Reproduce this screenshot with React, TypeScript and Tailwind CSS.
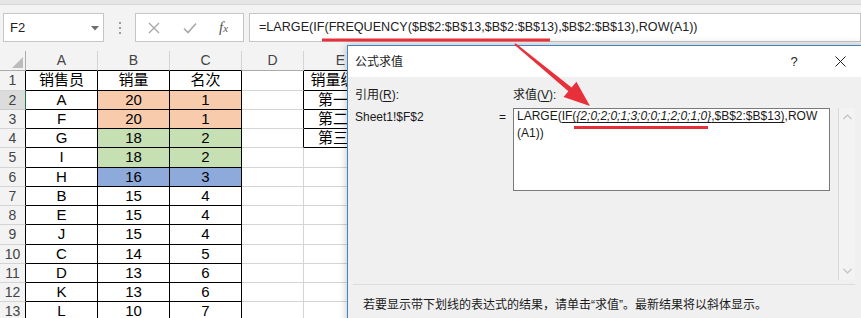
import React from "react";

const FONT = '"Liberation Sans", "Noto Sans CJK SC", sans-serif';

const colA = ["销售员", "A", "F", "G", "I", "H", "B", "E", "J", "C", "D", "K", "L"];
const colB = ["销量", "20", "20", "18", "18", "16", "15", "15", "15", "14", "13", "13", "10"];
const colC = ["名次", "1", "1", "2", "2", "3", "4", "4", "4", "5", "6", "6", "7"];
const colE = ["销量级别", "第一名", "第二名", "第三名"];

function fillOf(r: number, c: number): string {
  if (c === 2 || c === 3) {
    if (r === 2 || r === 3) return "bg-[#f8cbad]";
    if (r === 4 || r === 5) return "bg-[#c6e0b4]";
    if (r === 6) return "bg-[#8eaadb]";
  }
  return "bg-white";
}

function rightOf(r: number, c: number): string {
  if (c >= 1 && c <= 3) return "border-r-black";
  if ((c === 4 || c === 5) && r <= 4) return "border-r-black";
  return "border-r-[#d4d4d4]";
}

function bottomOf(r: number, c: number): string {
  if (c >= 1 && c <= 3) return "border-b-black";
  if (c === 5 && r <= 4) return "border-b-black";
  return "border-b-[#d4d4d4]";
}

function textOf(r: number, c: number): string {
  const i = r - 1;
  if (c === 1) return colA[i] ?? "";
  if (c === 2) return colB[i] ?? "";
  if (c === 3) return colC[i] ?? "";
  if (c === 5) return colE[i] ?? "";
  return "";
}

function Grid() {
  const headers = ["A", "B", "C", "D", "E", "F"];
  const cells: React.ReactNode[] = [];
  cells.push(
    <div key="corner" className="relative bg-[#f3f3f3] border-r border-b border-r-[#ababab] border-b-[#ababab]">
      <svg className="absolute left-[12px] top-[6px]" width="11" height="11" viewBox="0 0 11 11">
        <polygon points="11,0 11,11 0,11" fill="#bcbcbc" />
      </svg>
    </div>
  );
  headers.forEach((h, i) => {
    const c = i + 1;
    const bottom = c <= 3 || c === 5 ? "border-b-black" : "border-b-[#ababab]";
    cells.push(
      <div
        key={"h" + c}
        className={`flex items-center justify-center bg-[#f3f3f3] text-[14px] text-[#444] border-r border-b border-r-[#d4d4d4] ${bottom}`}
      >
        {h}
      </div>
    );
  });
  for (let r = 1; r <= 13; r++) {
    const sel = r === 2;
    cells.push(
      <div
        key={"rh" + r}
        className={
          sel
            ? "flex items-center justify-center text-[14px] text-[#444] bg-[#dcdcdc] border-r border-b border-r-[#217346] border-b-[#c8c8c8]"
            : "flex items-center justify-center text-[14px] text-[#444] bg-[#f3f3f3] border-r border-b border-r-black border-b-[#d4d4d4]"
        }
      >
        {r}
      </div>
    );
    for (let c = 1; c <= 6; c++) {
      cells.push(
        <div
          key={`c${r}-${c}`}
          className={`flex items-center justify-center overflow-hidden whitespace-nowrap text-[15px] text-black border-r border-b ${fillOf(r, c)} ${rightOf(r, c)} ${bottomOf(r, c)}`}
        >
          {textOf(r, c)}
        </div>
      );
    }
  }
  return (
    <div className="grid grid-cols-[26px_72px_72px_72px_62px_74px_1fr] grid-rows-[20px_20px_19px_19px_19px_20px_19px_19px_19px_20px_19px_19px_19px_20px]">
      {cells}
    </div>
  );
}

function FormulaBar() {
  return (
    <div className="h-[51px] bg-[#f3f3f3]">
      <div className="h-[5px] bg-[#e6e6e6] border-b border-[#d6d6d6]" />
      <div className="flex items-center mt-[8px] h-[29px] pl-[3px]">
        <div className="relative flex items-center w-[101px] h-[29px] bg-white border border-[#c6c6c6] pl-[6px] text-[13px] text-[#222]">
          F2
          <svg className="absolute left-[87px] top-[12px]" width="8" height="5" viewBox="0 0 8 5">
            <polygon points="0,0 8,0 4,4.5" fill="#6e6e6e" />
          </svg>
        </div>
        <div className="w-[31px] flex flex-col items-center gap-[3px]">
          <span className="block w-[2px] h-[2px] bg-[#9a9a9a]" />
          <span className="block w-[2px] h-[2px] bg-[#9a9a9a]" />
          <span className="block w-[2px] h-[2px] bg-[#9a9a9a]" />
        </div>
        <div className="flex items-center w-[109px] h-[29px] bg-white border border-[#c6c6c6]">
          <svg className="ml-[12px]" width="12" height="12" viewBox="0 0 12 12">
            <path d="M1 1 L11 11 M11 1 L1 11" stroke="#a8a8a8" strokeWidth="1.4" fill="none" />
          </svg>
          <svg className="ml-[23px]" width="14" height="12" viewBox="0 0 14 12">
            <path d="M1 6.5 L5 10.5 L13 1.5" stroke="#a8a8a8" strokeWidth="1.6" fill="none" />
          </svg>
          <span
            className="ml-[22px] text-[15px] italic text-[#555]"
            style={{ fontFamily: '"Liberation Serif", serif' }}
          >
            f<span className="text-[11px]">x</span>
          </span>
        </div>
        <div className="flex-1 flex items-center h-[29px] ml-[5px] bg-white border border-[#c6c6c6] pl-[9px] text-[12.6px] text-[#222] whitespace-nowrap">
          =LARGE(IF(FREQUENCY($B$2:$B$13,$B$2:$B$13),$B$2:$B$13),ROW(A1))
        </div>
      </div>
    </div>
  );
}

function Dialog() {
  return (
    <div className="absolute left-[347px] top-[45px] w-[517px] h-[290px] bg-[#f0f0f0] border border-[#3d86c8] shadow-[0_0_8px_rgba(0,0,0,0.25)] text-[12px] text-[#1a1a1a]">
      <div className="flex items-center h-[31px] bg-white pl-[7px]">
        <span>公式求值</span>
        <div className="ml-auto flex items-center h-full">
          <div className="w-[46px] flex items-center justify-center text-[13px] text-[#222]">?</div>
          <div className="w-[46px] flex items-center justify-center">
            <svg width="11" height="11" viewBox="0 0 11 11">
              <path d="M0.5 0.5 L10.5 10.5 M10.5 0.5 L0.5 10.5" stroke="#222" strokeWidth="1" fill="none" />
            </svg>
          </div>
        </div>
      </div>
      <div className="flex items-center h-[18px] mt-[9px] pl-[7px]">
        <span className="w-[158px]">
          引用(<span className="underline underline-offset-2">R</span>):
        </span>
        <span>
          求值(<span className="underline underline-offset-2">V</span>):
        </span>
      </div>
      <div className="flex mt-[4px] h-[172px]">
        <div className="w-[151px] pl-[7px] pt-[1px] leading-[16px]">Sheet1!$F$2</div>
        <div className="w-[14px] pt-[1px] leading-[16px]">=</div>
        <div className="w-[317px] h-[83px] bg-white border border-[#7a7a7a] pl-[3px] overflow-hidden">
          <div className="-mt-[1px] leading-[16.5px] whitespace-nowrap">
            LARGE(
            <span className="underline underline-offset-2">
              IF(<span className="italic">{"{2;0;2;0;1;3;0;0;1;2;0;1;0}"}</span>,$B$2:$B$13)
            </span>
            ,ROW
            <br />
            (A1))
          </div>
        </div>
        <div className="relative ml-[8px] w-[17px] h-[172px] border-l border-[#dadada] bg-[#f3f3f3]">
          <svg className="absolute left-[4px] top-[6px]" width="9" height="6" viewBox="0 0 9 6">
            <path d="M0.5 5 L4.5 1 L8.5 5" stroke="#c2c2c2" strokeWidth="1.2" fill="none" />
          </svg>
          <svg className="absolute left-[4px] bottom-[6px]" width="9" height="6" viewBox="0 0 9 6">
            <path d="M0.5 1 L4.5 5 L8.5 1" stroke="#c2c2c2" strokeWidth="1.2" fill="none" />
          </svg>
        </div>
      </div>
      <div className="ml-[5px] mt-[4px] w-[502px] h-px bg-[#dcdcdc]" />
      <div className="pl-[15px] mt-[12px] leading-[16px]">
        若要显示带下划线的表达式的结果，请单击“求值”。最新结果将以斜体显示。
      </div>
    </div>
  );
}

function Annotations() {
  return (
    <svg className="absolute left-0 top-0 pointer-events-none" width="861" height="318" viewBox="0 0 861 318">
      <rect x="322" y="38.5" width="228" height="3" fill="#e8303a" />
      <rect x="574" y="126" width="134" height="3" fill="#e8303a" />
      <polygon
        points="515.6,43.2 571.6,87.5 576.4,81.7 590,106 563.6,97.1 568.4,91.3 514.4,44.8"
        fill="#e8303a"
      />
    </svg>
  );
}

export default function App() {
  return (
    <div className="relative w-[861px] h-[318px] overflow-hidden bg-white" style={{ fontFamily: FONT }}>
      <FormulaBar />
      <Grid />
      <Dialog />
      <Annotations />
    </div>
  );
}
